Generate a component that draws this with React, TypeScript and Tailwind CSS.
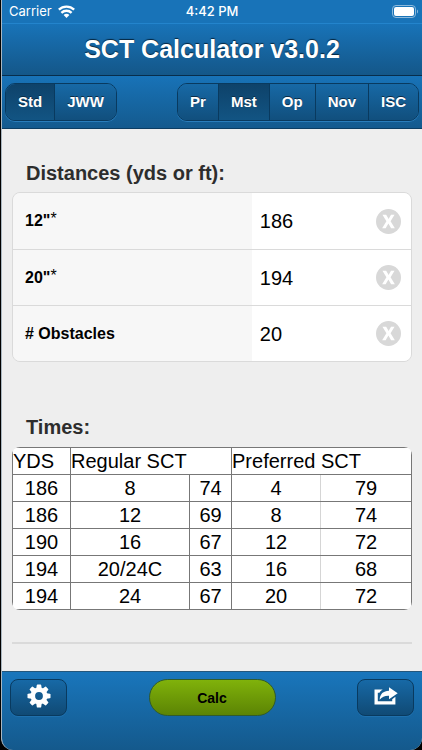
import React, { useState } from "react";
import clsx from "clsx";

const CLASSES = ["Std", "JWW"];
const LEVELS = ["Pr", "Mst", "Op", "Nov", "ISC"];

const ROWS = [
  ["186", "8", "74", "4", "79"],
  ["186", "12", "69", "8", "74"],
  ["190", "16", "67", "12", "72"],
  ["194", "20/24C", "63", "16", "68"],
  ["194", "24", "67", "20", "72"],
];

interface SegmentedProps {
  label: string;
  options: string[];
  initial: string;
}

function Segmented({ label, options, initial }: SegmentedProps) {
  const [value, setValue] = useState(initial);

  return (
    <div
      role="group"
      aria-label={label}
      className="flex h-[38px] overflow-hidden rounded-[10px] border border-[#093a5f] shadow-[0_1px_0_#2a7dbb]"
    >
      {options.map((option) => (
        <button
          key={option}
          type="button"
          aria-pressed={value === option}
          onClick={() => setValue(option)}
          className={clsx(
            "border-l border-[#093a5f] bg-linear-to-b px-3 text-[15px] font-bold text-white first:border-l-0 [text-shadow:0_-1px_0_#0a2c47]",
            value === option ? "from-[#0e426a] to-[#125483]" : "from-[#1769a6] to-[#114f7d]"
          )}
        >
          {option}
        </button>
      ))}
    </div>
  );
}

interface FieldProps {
  id: string;
  label: string;
  starred?: boolean;
  initial: string;
}

function Field({ id, label, starred, initial }: FieldProps) {
  const [value, setValue] = useState(initial);

  return (
    <div className="flex h-14 border-t border-[#dadada] first:border-t-0">
      <label htmlFor={id} className="flex w-3/5 items-center bg-[#f7f7f7] pl-3 text-base font-bold text-black">
        {label}
        {starred && <span className="pb-1 font-normal">*</span>}
      </label>
      <div className="flex min-w-0 flex-1 items-center bg-white pr-[10px] pl-2">
        <input
          id={id}
          inputMode="numeric"
          value={value}
          onChange={(e) => setValue(e.target.value)}
          className="w-full min-w-0 flex-1 text-xl text-black outline-none"
        />
        <button type="button" aria-label={`Clear ${label}`} onClick={() => setValue("")}>
          <svg viewBox="0 0 24 24" className="size-[25px]" fill="none">
            <circle cx="12" cy="12" r="12" fill="#d8d8d8" />
            <path
              d="M6.2 5.5h3.6l2.3 4.2 2.3-4.2h3.4l-3.8 6.3 4.1 6.7h-3.6l-2.6-4.5-2.6 4.5H5.9l4.1-6.7z"
              fill="#fff"
            />
          </svg>
        </button>
      </div>
    </div>
  );
}

function StatusBar() {
  return (
    <div className="flex h-[23px] items-center bg-[#1873b8] px-[7px] text-[13px] text-white">
      <div className="flex flex-1 items-center gap-[6px] font-['Inter',sans-serif]">
        Carrier
        <svg viewBox="0 0 16 12" className="h-[13px] w-[17px]" fill="none" stroke="#fff" strokeWidth="2.2">
          <path d="M.8 4.3a10.4 10.4 0 0 1 14.4 0" />
          <path d="M3.2 7.3a6.8 6.8 0 0 1 9.6 0" />
          <path d="M5.3 9.2a3.8 3.8 0 0 1 5.4 0L8 12z" fill="#fff" stroke="none" />
        </svg>
      </div>
      <div className="font-['Inter',sans-serif] font-medium">4:42 PM</div>
      <div className="flex flex-1 justify-end">
        <svg viewBox="0 0 27 13" className="-mr-1 h-[13px] w-[27px]">
          <rect x="0.5" y="0.5" width="23" height="12" rx="3.5" fill="none" stroke="#8cb9dc" />
          <rect x="2" y="2" width="20" height="9" rx="2" fill="#fff" />
          <path d="M25 4.5c1.4.5 1.4 3.5 0 4z" fill="#8cb9dc" />
        </svg>
      </div>
    </div>
  );
}

function GearIcon() {
  return (
    <svg viewBox="-12 -12 24 24" className="size-6" fill="#fff">
      <circle r="6.2" fill="none" stroke="#fff" strokeWidth="4.6" />
      {[0, 45, 90, 135, 180, 225, 270, 315].map((angle) => (
        <path key={angle} d="M-2.7-7.5l.5-3.4q.1-.6.7-.6h3q.6 0 .7.6l.5 3.4z" transform={`rotate(${angle})`} />
      ))}
    </svg>
  );
}

function ShareIcon() {
  return (
    <svg viewBox="0 0 24 18" className="h-[18px] w-6" fill="#fff">
      <path d="M.5 2.5h8.2C7.2 3.4 6.2 4.5 5.5 5.8H3.8v8.4h14.4v-2l3.2-2.4v7.7H.5z" />
      <path d="M15 .3L23.7 6.2 15 12.2V8.8c-4-.2-6.8 1-9.4 4C6 6.800 9.200 3.900 15 3.700z" />
    </svg>
  );
}

const toolButton =
  "flex h-[37px] w-[57px] items-start justify-center rounded-lg border border-[#093a5f] bg-linear-to-b from-[#1769a6] to-[#104a75] shadow-[0_1px_0_#1f70ad]";

export default function App() {
  return (
    <div className="bg-black pl-px font-['Liberation_Sans',Arial,sans-serif]">
      <div className="flex min-h-screen flex-col overflow-hidden rounded-b-xl border-l border-[#a9b6c0] bg-[#eee]">
        <StatusBar />
        <header className="flex h-[53px] items-center justify-center border-t border-b border-t-[#2384cc] border-b-[#082e4c] bg-linear-to-b from-[#1873b8] to-[#145789]">
          <h1 className="text-[25px] font-bold text-white [text-shadow:0_-1px_1px_#05263f]">SCT Calculator v3.0.2</h1>
        </header>

        <div className="flex h-[53px] items-center justify-between border-b border-[#0c3d63] bg-linear-to-b from-[#1873b8] to-[#145a8e] px-[3px]">
          <Segmented label="Course" options={CLASSES} initial="Std" />
          <Segmented label="Level" options={LEVELS} initial="Mst" />
        </div>

        <main className="flex-1 px-[10px] pt-8">
          <h2 className="px-[14px] pb-[7px] text-xl leading-6 font-bold text-[#2d2d2d]">Distances (yds or ft):</h2>
          <div className="overflow-hidden rounded-lg border border-[#dadada]">
            <Field id="dist12" label={'12"'} starred initial="186" />
            <Field id="dist20" label={'20"'} starred initial="194" />
            <Field id="obstacles" label="# Obstacles" initial="20" />
          </div>

          <h2 className="mt-[53px] px-[14px] pb-2 text-xl leading-6 font-bold text-[#2d2d2d]">Times:</h2>
          <div className="overflow-hidden rounded-lg">
            <table className="w-full table-fixed border-collapse border border-[#777] bg-white text-xl leading-[26px] text-black">
              <colgroup>
                <col className="w-[58px]" />
                <col className="w-[119px]" />
                <col className="w-[42px]" />
                <col className="w-[89px]" />
                <col />
              </colgroup>
              <thead>
                <tr className="text-left">
                  <th scope="col" className="border border-[#777] p-0 font-normal">YDS</th>
                  <th scope="colgroup" colSpan={2} className="border border-[#777] p-0 font-normal">Regular SCT</th>
                  <th scope="colgroup" colSpan={2} className="border border-[#777] p-0 font-normal">Preferred SCT</th>
                </tr>
              </thead>
              <tbody>
                {ROWS.map((row, i) => (
                  <tr key={i}>
                    {row.map((cell, j) => (
                      <td
                        key={j}
                        className={clsx(
                          "border border-[#777] p-0 text-center",
                          j === 3 && "border-r-[#d5d5d5]",
                          j === 4 && "border-l-[#d5d5d5]"
                        )}
                      >
                        {cell}
                      </td>
                    ))}
                  </tr>
                ))}
              </tbody>
            </table>
          </div>
          <hr className="mt-8 border-t-2 border-[#dadada]" />
        </main>

        <footer className="flex h-[79px] items-start justify-between border-t border-[#24577c] bg-linear-to-b from-[#1976bc] to-[#14598c] px-2 pt-[7px]">
          <button type="button" aria-label="Settings" className={clsx(toolButton, "pt-1")}>
            <GearIcon />
          </button>
          <button
            type="button"
            className="h-[37px] w-[127px] rounded-full border border-[#315b2b] bg-linear-to-b from-[#80b20b] to-[#5c8404] text-sm font-bold text-black"
          >
            Calc
          </button>
          <button type="button" aria-label="Share" className={clsx(toolButton, "pt-[7px]")}>
            <ShareIcon />
          </button>
        </footer>
      </div>
    </div>
  );
}
